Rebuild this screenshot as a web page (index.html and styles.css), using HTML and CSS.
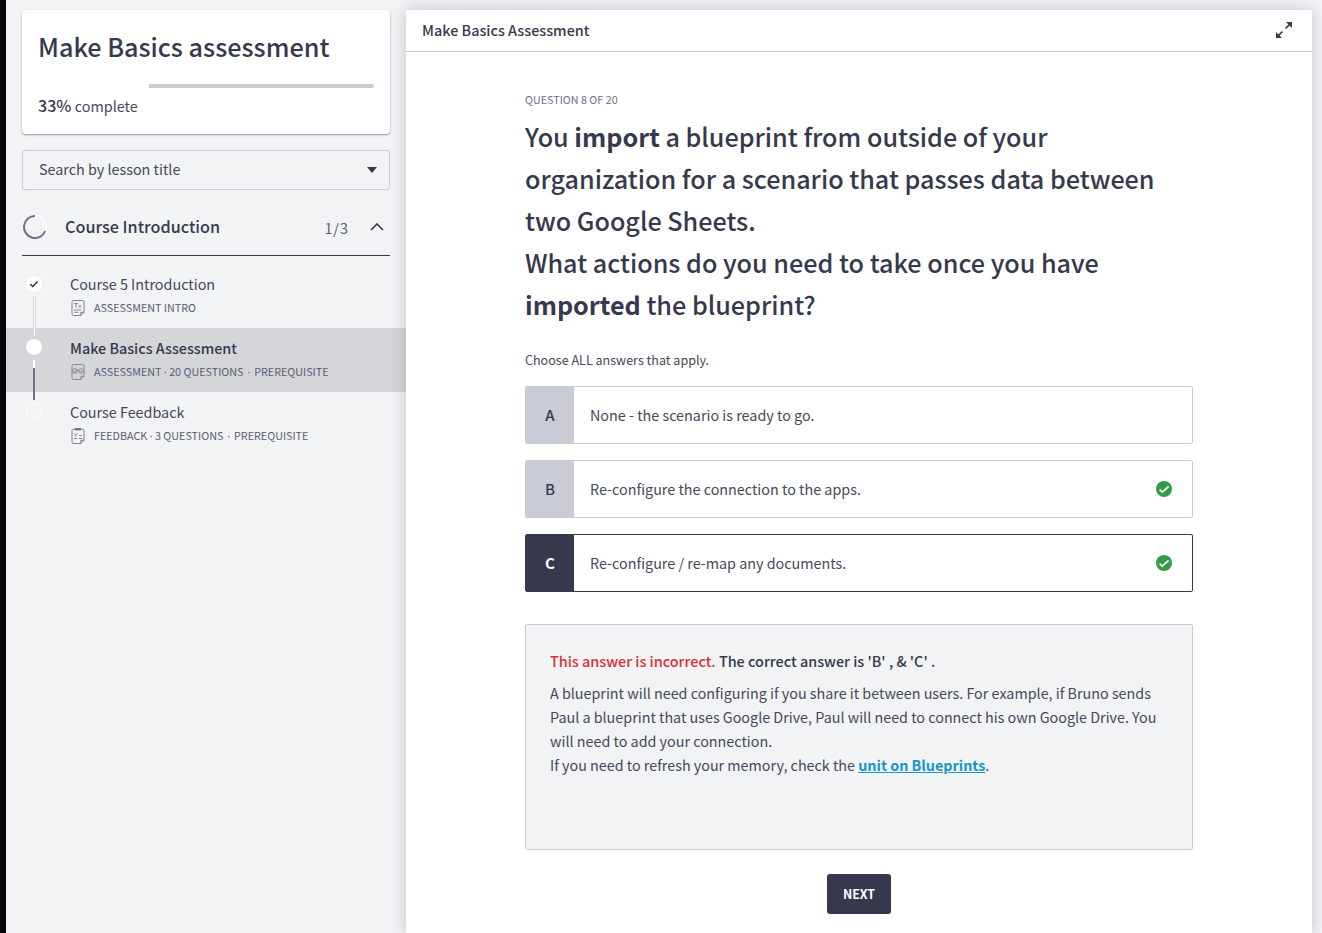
FILE: index.html
```html
<!DOCTYPE html>
<html lang="en">
<head>
<meta charset="utf-8">
<title>Make Basics assessment</title>
<link rel="stylesheet" href="styles.css">
</head>
<body>
<div class="app">
  <aside class="sidebar">
    <section class="course-card">
      <h1 class="course-title">Make Basics assessment</h1>
      <div class="progress"><div class="progress-done" style="width:33%"></div></div>
      <p class="progress-label"><strong>33%</strong> complete</p>
    </section>
    <div class="search"><span class="search-text">Search by lesson title</span>
      <svg class="caret" viewBox="0 0 10 6"><path d="M0 0h10L5 6z" fill="#36394d"/></svg>
    </div>
    <div class="section-head">
      <svg class="ring" viewBox="0 0 26 26" fill="none"><circle cx="13" cy="13" r="11" stroke="#fff" stroke-width="1.5"/><path d="M13 2A11 11 0 1 0 23.2 17" stroke="#6e7087" stroke-width="2"/></svg>
      <h2 class="section-title">Course Introduction</h2>
      <span class="section-count">1/3</span>
      <svg class="chevron" viewBox="0 0 14 8" fill="none"><path d="M1 7l6-6 6 6" stroke="#36394d" stroke-width="1.6"/></svg>
    </div>
    <ul class="lessons">
      <li class="lesson">
        <div class="rail"><span class="dot"><svg viewBox="0 0 16 16" fill="none"><path d="M4.3 8.3l2.4 2.2 5-5" stroke="#333" stroke-width="1.5"/></svg></span><span class="line line-pale"></span></div>
        <div class="lesson-body">
          <h3 class="lesson-title">Course 5 Introduction</h3>
          <p class="meta"><svg class="doc" viewBox="0 0 14 16" fill="none" stroke="#7d7e90"><path d="M2.500.5h9q1.500 0 1.500 1.500v10.300l-3.200 3.200h-7.300q-1.500 0-1.500-1.500v-12q0-1.500 1.500-1.500zM13 12.300h-3.200v3.200"/><path d="M2.800 3.600h4.400M5 3.600v4M7.500 5l2.700 2.600M10.200 5l-2.700 2.600M3 10h7M3 12.300h4.500" stroke-width=".9"/></svg><span>ASSESSMENT INTRO</span></p>
        </div>
      </li>
      <li class="lesson lesson-active">
        <div class="rail"><span class="dot"></span><span class="line line-dark"></span></div>
        <div class="lesson-body">
          <h3 class="lesson-title">Make Basics Assessment</h3>
          <p class="meta"><svg class="doc" viewBox="0 0 14 16" fill="none" stroke="#858696"><path d="M2.500.5h9q1.500 0 1.500 1.500v10.300l-3.200 3.200h-7.300q-1.500 0-1.500-1.500v-12q0-1.500 1.500-1.500zM13 12.300h-3.200v3.200"/><circle cx="4" cy="7" r="2.300"/><circle cx="10" cy="7" r="2.300"/><path d="M3 7l1 1 3-2.500L9.500 8 11 6.500" stroke-width=".9"/></svg><span>ASSESSMENT <i class="sep">·</i> 20 QUESTIONS <i class="sep sep-wide">·</i> PREREQUISITE</span></p>
        </div>
      </li>
      <li class="lesson">
        <div class="rail"><span class="dot dot-empty"></span></div>
        <div class="lesson-body">
          <h3 class="lesson-title">Course Feedback</h3>
          <p class="meta"><svg class="doc" viewBox="0 0 14 16" fill="none" stroke="#7d7e90"><path d="M2.500 1.200h9q1.500 0 1.500 1.500v9.600l-3.200 3.200h-7.300q-1.500 0-1.500-1.500v-11.300q0-1.500 1.500-1.500zM13 12.300h-3.200v3.200"/><path d="M4 1.200h6" stroke="#6e7087" stroke-width="2.400"/><path d="M3 5.500l1.700 1.800L6.800 5M4.700 7.300v1.500M8 7.500h3M3 10.500h3.500M8 10.500h3" stroke-width=".9"/></svg><span>FEEDBACK <i class="sep">·</i> 3 QUESTIONS <i class="sep sep-wide">·</i> PREREQUISITE</span></p>
        </div>
      </li>
    </ul>
  </aside>
  <main class="panel">
    <header class="panel-head">
      <h2 class="panel-title">Make Basics Assessment</h2>
      <svg class="expand" viewBox="0 0 16 16" fill="none" stroke="#36394d"><path d="M9.500 6.500l5-5M6.500 9.500l-5 5" stroke-width="1.700"/><path d="M10 0h6v6zM0 10v6h6z" fill="#36394d" stroke="none"/></svg>
    </header>
    <div class="quiz">
      <p class="counter">QUESTION 8 OF 20</p>
      <h1 class="question">You <b>import</b> a blueprint from outside of your<br>organization for a scenario that passes data between<br>two Google Sheets.<br>What actions do you need to take once you have<br><b>imported</b> the blueprint?</h1>
      <p class="hint">Choose ALL answers that apply.</p>
      <div class="answer"><span class="key">A</span><span class="answer-text">None - the scenario is ready to go.</span></div>
      <div class="answer"><span class="key">B</span><span class="answer-text">Re-configure the connection to the apps.</span><svg class="ok" viewBox="0 0 16 16"><circle cx="8" cy="8" r="8" fill="#349b48"/><path d="M3.600 8.700l2.700 2.500 6.300-5.900" fill="none" stroke="#fff" stroke-width="1.700"/></svg></div>
      <div class="answer answer-selected"><span class="key">C</span><span class="answer-text">Re-configure / re-map any documents.</span><svg class="ok" viewBox="0 0 16 16"><circle cx="8" cy="8" r="8" fill="#349b48"/><path d="M3.600 8.700l2.700 2.500 6.300-5.900" fill="none" stroke="#fff" stroke-width="1.700"/></svg></div>
      <section class="feedback">
        <p class="verdict"><span class="wrong">This answer is incorrect.</span> The correct answer is 'B' , &amp; 'C' .</p>
        <p class="explain">A blueprint will need configuring if you share it between users. For example, if Bruno sends<br>Paul a blueprint that uses Google Drive, Paul will need to connect his own Google Drive. You<br>will need to add your connection.<br>If you need to refresh your memory, check the <a class="link" href="#">unit on Blueprints</a>.</p>
      </section>
      <button class="next">NEXT</button>
    </div>
  </main>
</div>
</body>
</html>
```
FILE: styles.css
```css
* { box-sizing: border-box; }
body {
  margin: 0;
  height: 933px;
  overflow: hidden;
  background: #f1f3f5;
  color: #36394d;
  font-family: "Noto Sans CJK SC", "Noto Sans", sans-serif;
  font-size: 14.4px;
}
h1, h2, h3, p, ul { margin: 0; padding: 0; font-weight: 500; }
svg { display: block; flex: none; }
.app { display: flex; height: 933px; border-left: 6px solid #07060b; }
.sidebar { width: 400px; flex: none; padding-top: 10px; }
.course-card {
  height: 124px; margin: 0 16px; padding: 16px 16px 0;
  background: #fff; border-radius: 4px;
  box-shadow: 0 1px 2px rgba(30, 34, 50, .45);
}
.course-title { font-size: 25.2px; line-height: 40px; }
.progress { height: 4px; margin-top: 18px; background: #c9cbd5; border-radius: 2px; }
.progress-done { height: 4px; background: #fff; }
.progress-label { margin-top: 6px; line-height: 24px; color: #46485a; font-weight: 400; }
.progress-label strong { font-weight: 500; font-size: 16.1px; line-height: 20px; color: #36394d; }
.search {
  display: flex; align-items: center; justify-content: space-between;
  height: 40px; margin: 16px 16px 0; padding: 0 12px 0 16px;
  border: 1px solid #c9cbd5; border-radius: 3px; color: #46485a;
}
.search-text { padding-bottom: 3px; font-size: 14.35px; }
.caret { width: 10px; height: 6px; }
.section-head {
  display: flex; align-items: center; height: 66px; margin: 0 16px; padding-top: 9px;
  border-bottom: 1px solid #36394d;
}
.ring { width: 26px; height: 26px; }
.section-title { margin-left: 17px; padding-bottom: 2px; font-size: 16.2px; }
.section-count { margin-left: auto; color: #5a5c70; letter-spacing: 1px; }
.chevron { width: 14px; height: 8px; margin: 0 6px 0 21px; }
.lessons { list-style: none; padding-top: 8px; }
.lesson { display: flex; height: 64px; }
.lesson-active { background: #d5d6da; }
.rail { width: 16px; margin-left: 20px; padding-top: 12px; display: flex; flex-direction: column; align-items: center; }
.lesson + .lesson .rail { padding-top: 11px; }
.dot { width: 16px; height: 16px; border-radius: 50%; background: #fff; flex: none; }
.dot-empty { background: none; border: 1px solid #fff; }
.line { width: 3px; height: 40px; margin-top: 4px; flex: none; }
.line-pale { border: 1px solid #d5d6da; border-width: 0 1px; background: #fff; }
.line-dark { width: 2px; margin-top: 5px; background: linear-gradient(#fff 8px, #6e7087 8px); }
.lesson-body { margin-left: 28px; padding-top: 8px; }
.lesson-title { font-size: 14.35px; line-height: 24px; font-weight: 400; color: #46485a; }
.lesson-active .lesson-title { font-weight: 500; color: #36394d; }
.meta { display: flex; align-items: center; height: 22px; gap: 9px; font-size: 10.75px; font-weight: 400; color: #5a5c70; }
.sep { font-family: "Noto Sans", sans-serif; font-style: normal; line-height: 1; }
.sep-wide { margin: 0 1.5px; }
.doc { width: 14px; height: 16px; margin: 2px 0 0 1px; }
.panel { width: 906px; margin-top: 10px; background: #fff; box-shadow: 0 0 14px rgba(30, 34, 50, .22); }
.panel-head {
  display: flex; align-items: center; justify-content: space-between;
  height: 42px; padding: 0 20px 2px 16px; border-bottom: 1px solid #c9cbd0;
}
.panel-title { font-size: 14.4px; }
.expand { width: 16px; height: 16px; }
.quiz { display: flex; flex-direction: column; width: 668px; margin-left: 119px; padding-top: 40px; }
.counter { font-size: 10.75px; line-height: 16px; font-weight: 400; color: #6e7087; }
.question { margin-top: 7px; font-size: 25.17px; line-height: 42px; white-space: nowrap; }
.hint { margin-top: 25px; font-size: 12.55px; line-height: 20px; font-weight: 400; color: #46485a; }
.answer {
  display: flex; align-items: center; height: 58px; margin-top: 16px; padding-right: 20px;
  border: 1px solid #c9cbd5; border-radius: 2px;
}
.key { align-self: stretch; width: 48px; background: #c9cbd5; font-weight: 500; font-size: 15px; line-height: 56px; text-align: center; }
.answer-text { margin-left: 16px; padding-bottom: 2px; flex: 1; font-size: 14.35px; color: #46485a; }
.answer-selected { border-color: #36394d; }
.answer-selected .key { background: #36394d; color: #fff; font-weight: 700; }
.ok { width: 16px; height: 16px; }
.feedback { height: 226px; margin-top: 32px; padding: 24px; background: #f1f3f5; border: 1px solid #c9cbd5; border-radius: 2px; white-space: nowrap; }
.verdict { line-height: 24px; }
.wrong { color: #d92f3a; }
.explain { margin-top: 8px; font-size: 14.34px; line-height: 24px; font-weight: 400; color: #46485a; }
.link { color: #1a94c9; font-weight: 700; text-decoration: underline; }
.next { align-self: center; width: 64px; height: 40px; margin-top: 24px; padding: 0; border: 0; border-radius: 3px; background: #36394d; color: #fff; font: 700 12.4px/40px "Noto Sans CJK SC", "Noto Sans", sans-serif; }
```
